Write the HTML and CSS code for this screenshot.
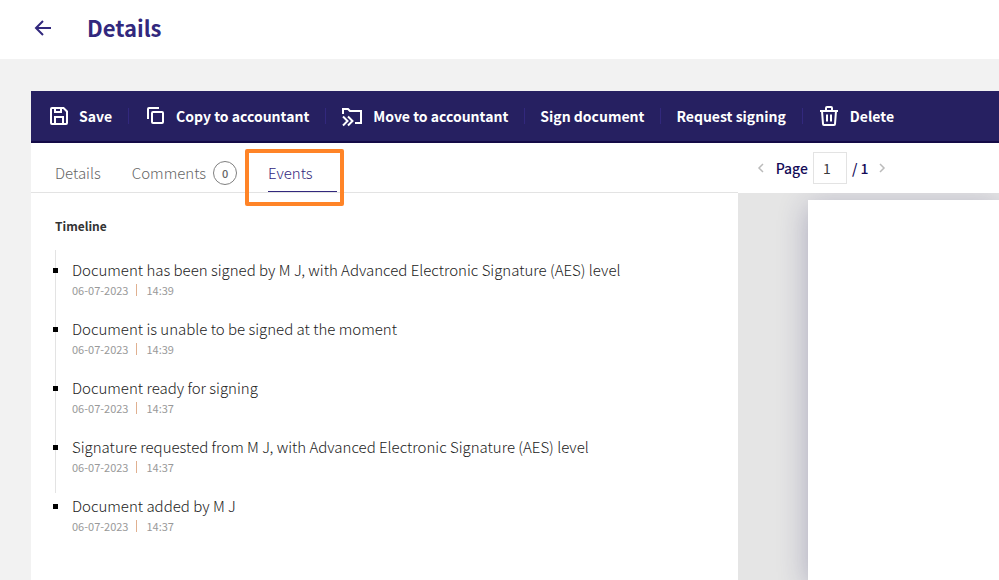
FILE: index.html
```html
<!DOCTYPE html>
<html lang="en">
<head>
  <meta charset="UTF-8" />
  <meta name="viewport" content="width=device-width, initial-scale=1.0" />
  <title>Details</title>
  <link rel="stylesheet" href="styles.css">
</head>
<body>
  <header class="header">
    <a href="#" class="back" aria-label="Back">
      <svg width="24" height="24" viewBox="0 0 24 24" fill="none" stroke="currentColor" stroke-width="2">
        <path d="M20 12H5M12 5l-7 7 7 7" />
      </svg>
    </a>
    <h1>Details</h1>
  </header>

  <main class="document">
    <div class="toolbar">
      <button type="button">
        <svg width="24" height="24" viewBox="0 0 24 24" fill="none" stroke="currentColor" stroke-width="2">
          <path d="M5 4h11.500l3.500 3.500V19a1 1 0 0 1-1 1H5a1 1 0 0 1-1-1V5a1 1 0 0 1 1-1z" />
          <path d="M8 20v-7h8v7M8 4v4h6V4" />
        </svg>
        Save
      </button>
      <button type="button">
        <svg width="24" height="24" viewBox="0 0 24 24" fill="none" stroke="currentColor" stroke-width="2">
          <path d="M4 15V5a1 1 0 0 1 1-1h10" />
          <rect x="8" y="8" width="11" height="11" rx="1" />
        </svg>
        Copy to accountant
      </button>
      <button type="button">
        <svg width="24" height="24" viewBox="0 0 24 24" fill="none" stroke="currentColor" stroke-width="2">
          <path d="M2 10V5h5l2 2h11v12h-6" />
          <path d="M2 12.500L6.500 17L2 21.500M7 12.500l4.500 4.500L7 21.500" />
        </svg>
        Move to accountant
      </button>
      <button type="button">Sign document</button>
      <button type="button">Request signing</button>
      <button type="button">
        <svg width="24" height="24" viewBox="0 0 24 24" fill="none" stroke="currentColor" stroke-width="2">
          <path d="M2 7h18M8 7V4a1 1 0 0 1 1-1h4a1 1 0 0 1 1 1v3" />
          <path d="M4 7l1 13a1 1 0 0 0 1 1h10a1 1 0 0 0 1-1l1-13M9 10.500v7M13 10.500v7" />
        </svg>
        Delete
      </button>
    </div>

    <div class="panels">
      <section class="info">
        <nav class="tabs">
          <a href="#" class="tab">Details</a>
          <a href="#" class="tab">Comments <span class="count">0</span></a>
          <a href="#" class="tab active">Events</a>
        </nav>
        <div class="events">
          <h2>Timeline</h2>
          <ul class="timeline">
            <li>
              <p>Document has been signed by M J, with Advanced Electronic Signature (AES) level</p>
              <div class="meta"><span>06-07-2023</span><span>14:39</span></div>
            </li>
            <li>
              <p>Document is unable to be signed at the moment</p>
              <div class="meta"><span>06-07-2023</span><span>14:39</span></div>
            </li>
            <li>
              <p>Document ready for signing</p>
              <div class="meta"><span>06-07-2023</span><span>14:37</span></div>
            </li>
            <li>
              <p>Signature requested from M J, with Advanced Electronic Signature (AES) level</p>
              <div class="meta"><span>06-07-2023</span><span>14:37</span></div>
            </li>
            <li>
              <p>Document added by M J</p>
              <div class="meta"><span>06-07-2023</span><span>14:37</span></div>
            </li>
          </ul>
        </div>
      </section>

      <section class="preview">
        <div class="pager">
          <button type="button" aria-label="Previous page">
            <svg width="8" height="12" viewBox="0 0 8 12" fill="none" stroke="currentColor" stroke-width="1.500">
              <path d="M6 2L2 6l4 4" />
            </svg>
          </button>
          <label for="page">Page</label>
          <input id="page" type="text" value="1">
          <span>/ 1</span>
          <button type="button" aria-label="Next page">
            <svg width="8" height="12" viewBox="0 0 8 12" fill="none" stroke="currentColor" stroke-width="1.500">
              <path d="M2 2l4 4-4 4" />
            </svg>
          </button>
        </div>
        <div class="canvas">
          <div class="page"></div>
        </div>
      </section>
    </div>
  </main>
</body>
</html>
```
FILE: styles.css
```css
* {
  box-sizing: border-box;
}
body {
  margin: 0;
  min-height: 100vh;
  display: flex;
  flex-direction: column;
  overflow: hidden;
  background-color: #f2f2f2;
  color: #333;
  font-family: "Noto Sans CJK SC", "Open Sans", sans-serif;
  font-size: 14px;
  line-height: 20px;
}
h1, h2, p, ul {
  margin: 0;
  padding: 0;
}
button {
  border: 0;
  background: none;
  font: inherit;
  cursor: pointer;
}
a {
  color: inherit;
  text-decoration: none;
}

/* Header */
.header {
  display: flex;
  align-items: center;
  gap: 32px;
  height: 59px;
  padding: 0 31px 4px;
  background-color: white;
  color: #32287d;
}
.back {
  display: flex;
}
h1 {
  padding-bottom: 2px;
  font-size: 22px;
  line-height: 32px;
}

/* Toolbar */
.document {
  flex: 1;
  display: flex;
  flex-direction: column;
  margin: 32px 0 0 31px;
  background-color: white;
}
.toolbar {
  display: flex;
  align-items: center;
  height: 52px;
  background-color: #262061;
  border-bottom: 2px solid #140b47;
}
.toolbar button {
  display: flex;
  align-items: center;
  gap: 8px;
  padding: 0 16px;
  color: white;
  font-weight: bold;
  line-height: 16px;
  white-space: nowrap;
  min-height: 16px;
}
.toolbar button + button {
  padding-left: 15px;
  border-left: 1px solid #32287d;
}
.toolbar button {
  height: 16px;
}
.toolbar svg {
  flex: none;
}

/* Left side */
.panels {
  flex: 1;
  display: grid;
  grid-template-columns: 73fr 27fr;
}
.tabs {
  display: flex;
  gap: 31px;
  height: 50px;
  padding: 0 24px;
  border-bottom: 1px solid #e3e3e3;
  color: #666;
  font-size: 15px;
  font-weight: 300;
}
.tab {
  position: relative;
  display: flex;
  align-items: center;
  gap: 7px;
  padding-top: 11px;
  border-bottom: 1px solid transparent;
}
.count {
  width: 24px;
  height: 24px;
  border: 1px solid #808080;
  border-radius: 50%;
  font-size: 11px;
  font-weight: 500;
  line-height: 22px;
  text-align: center;
}
.active {
  padding-right: 24px;
  border-color: #32287d;
  color: #32287d;
}
/* Highlight box around the open tab */
.active::after {
  content: "";
  position: absolute;
  top: 6px;
  left: -23px;
  right: -7px;
  bottom: -15px;
  border: 4px solid #ff8427;
  border-radius: 2px;
}
.events {
  padding: 23px 24px;
}
h2 {
  font-size: 12px;
  line-height: 20px;
}
.timeline {
  margin-top: 14px;
  list-style: none;
}
.timeline li {
  min-height: 59px;
  padding: 3px 0 12px 16px;
  border-left: 1px solid #e3e3e3;
}
.timeline li:first-child {
  min-height: 66px;
  padding-top: 10px;
}
.timeline li:last-child {
  border-color: transparent;
}
.timeline p {
  position: relative;
  color: #222;
  font-size: 15px;
  font-weight: 300;
  line-height: 20px;
}
.timeline p::before {
  content: "";
  position: absolute;
  top: 8px;
  left: -19px;
  width: 5px;
  height: 5px;
  background-color: black;
}
.meta {
  display: flex;
  align-items: center;
  height: 20px;
  color: #999;
  font-size: 11px;
}
.meta span + span {
  margin-left: 8px;
  padding-left: 9px;
  border-left: 1px solid #e0b090;
  line-height: 12px;
}

/* Right side */
.preview {
  display: flex;
  flex-direction: column;
}
.pager {
  display: flex;
  align-items: center;
  gap: 5px;
  height: 50px;
  padding-left: 19px;
  color: #140b57;
  font-weight: 500;
}
.pager button {
  display: flex;
  padding: 0;
  color: #bbb;
}
.pager input {
  width: 34px;
  height: 32px;
  padding: 0 9px;
  border: 1px solid #e3e3e3;
  color: #3c3c3c;
  font: inherit;
  font-weight: 400;
}
.pager label {
  margin-left: 6px;
}
.pager span {
  margin-right: 4px;
}
.canvas {
  flex: 1;
  display: flex;
  overflow: hidden;
  padding: 7px 0 0 70px;
  background-color: #e5e5e5;
}
.page {
  flex: 1;
  background-color: white;
  box-shadow: 0 6px 28px rgba(38, 32, 97, 0.3);
}
```
